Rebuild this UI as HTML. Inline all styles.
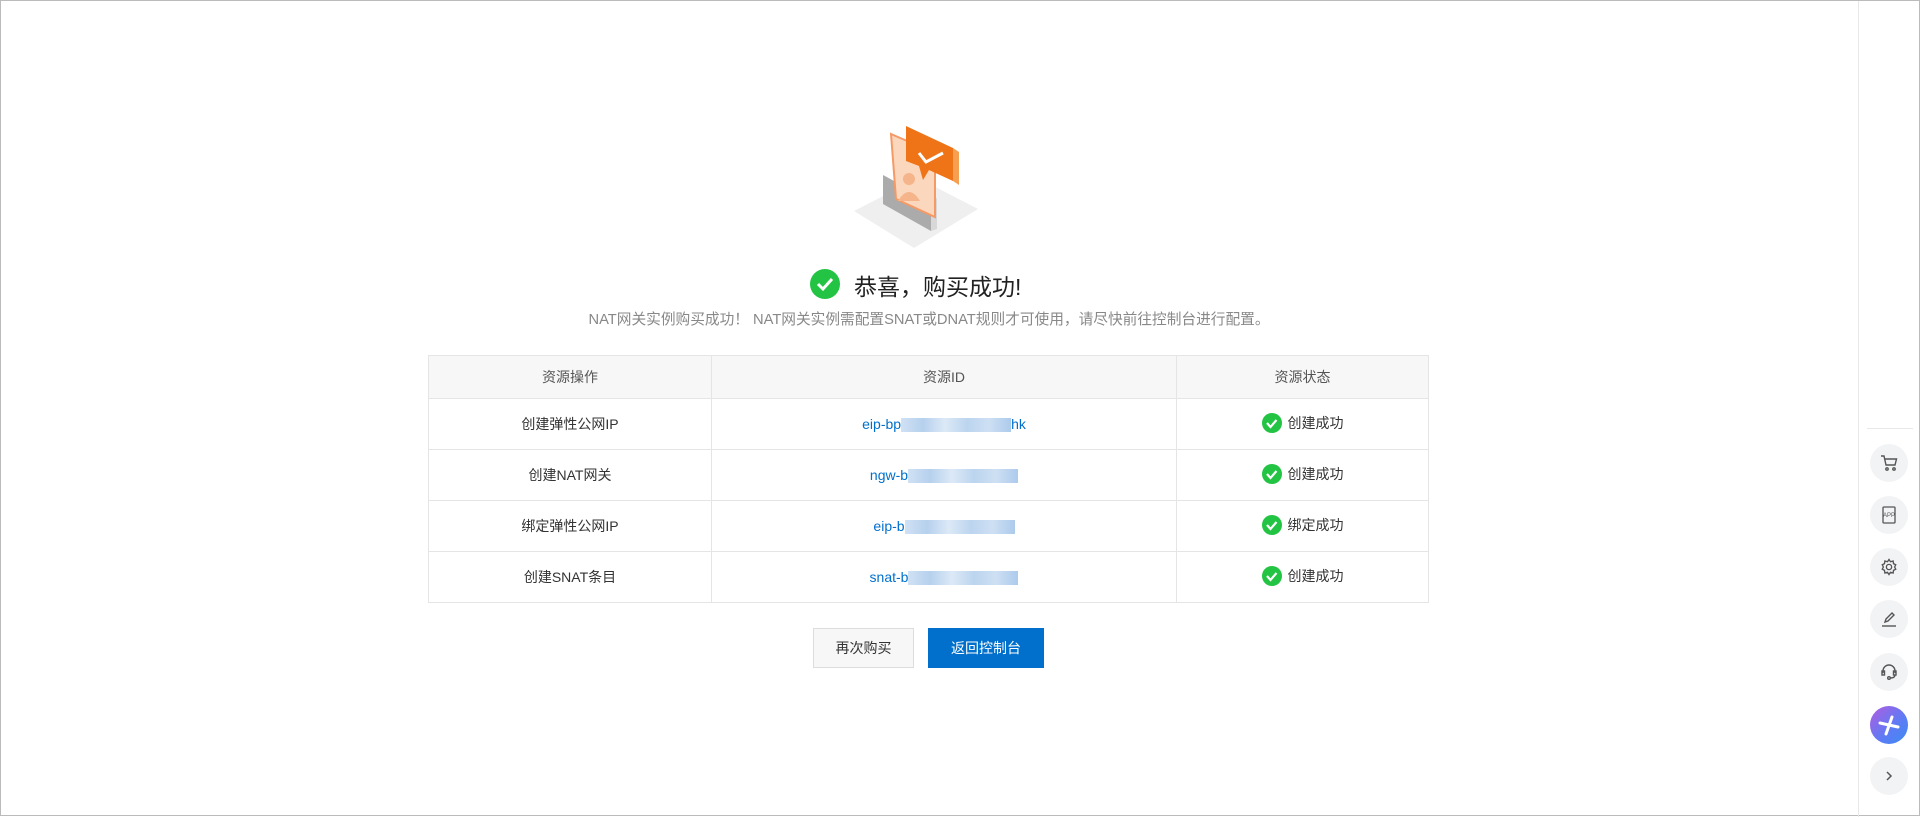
<!DOCTYPE html>
<html><head><meta charset="utf-8"><style>
*{margin:0;padding:0;box-sizing:border-box}
body{width:1920px;height:816px;background:#fff;font-family:"Liberation Sans","Noto Sans CJK SC",sans-serif;position:relative;overflow:hidden;border:1px solid #bbb}
.abs{position:absolute}
table{position:absolute;left:427px;top:354px;width:1001px;border-collapse:collapse;font-size:14px;color:#333}
td,th{border:1px solid #e5e5e5;text-align:center;font-weight:normal}
th{background:#f7f7f7;height:43px;color:#555}
td{height:51px}
a{color:#0070cc;text-decoration:none}
.blur{display:inline-block;width:110px;height:14px;vertical-align:middle;background:linear-gradient(90deg,#c8dcf2,#a9c8ea,#d6e5f5,#b0cdec,#c5daf1,#9ec1e8);opacity:.85}
.ok{display:inline-flex;align-items:center;gap:6px}
.sb{position:absolute;left:1857px;top:0;width:1px;height:816px;background:#e8e8e8}
.ic{position:absolute;left:1869px;width:38px;height:38px;border-radius:50%;background:#f2f3f5;display:flex;align-items:center;justify-content:center}
</style></head><body>
<svg class="abs" style="left:850px;top:120px" width="135" height="130" viewBox="0 0 135 130">
<polygon points="3,90 67,57 127,88 63,127" fill="#efefef"/>
<polygon points="32,54 80,80 80,110 32,83" fill="#ababab"/>
<polygon points="80,80 86,77 86,108 80,110" fill="#d8d8d8"/>
<polygon points="40,13 84,32 84,96 45,78" fill="#fbd7bd" stroke="#f59a66" stroke-width="2"/>
<circle cx="58" cy="58" r="6" fill="#f5b48a"/><path d="M47,80 q11,-18 22,0z" fill="#f5b48a"/>
<polygon points="55,5 102,27 102,60 78,49 72,59 68,45 55,40" fill="#ef7417"/>
<polygon points="102,27 108,31 108,64 102,60" fill="#f5a050"/>
<path d="M68,32 l7,9 l17,-9" stroke="#fff" stroke-width="3" fill="none"/>
</svg>
<svg class="abs" style="left:809px;top:268px" width="30" height="30" viewBox="0 0 30 30"><circle cx="15" cy="15" r="15" fill="#23c343"/><path d="M8,15 l5,5 l9,-10" stroke="#fff" stroke-width="3" fill="none"/></svg>
<div class="abs" style="left:853px;top:267px;font-size:23px;color:#222">恭喜，购买成功!</div>
<div class="abs" style="left:0;width:1856px;top:307px;text-align:center;font-size:14.7px;color:#888">NAT网关实例购买成功！ NAT网关实例需配置SNAT或DNAT规则才可使用，请尽快前往控制台进行配置。</div>
<table>
<tr><th style="width:283px">资源操作</th><th style="width:465px">资源ID</th><th>资源状态</th></tr>
<tr><td>创建弹性公网IP</td><td><a>eip-bp<span class="blur"></span>hk</a></td><td><span class="ok"><svg width="20" height="20"><circle cx="10" cy="10" r="10" fill="#23c343"/><path d="M5,10 l3.5,4 l6,-7" stroke="#fff" stroke-width="2.2" fill="none"/></svg>创建成功</span></td></tr>
<tr><td>创建NAT网关</td><td><a>ngw-b<span class="blur"></span></a></td><td><span class="ok"><svg width="20" height="20"><circle cx="10" cy="10" r="10" fill="#23c343"/><path d="M5,10 l3.5,4 l6,-7" stroke="#fff" stroke-width="2.2" fill="none"/></svg>创建成功</span></td></tr>
<tr><td>绑定弹性公网IP</td><td><a>eip-b<span class="blur"></span></a></td><td><span class="ok"><svg width="20" height="20"><circle cx="10" cy="10" r="10" fill="#23c343"/><path d="M5,10 l3.5,4 l6,-7" stroke="#fff" stroke-width="2.2" fill="none"/></svg>绑定成功</span></td></tr>
<tr><td>创建SNAT条目</td><td><a>snat-b<span class="blur"></span></a></td><td><span class="ok"><svg width="20" height="20"><circle cx="10" cy="10" r="10" fill="#23c343"/><path d="M5,10 l3.5,4 l6,-7" stroke="#fff" stroke-width="2.2" fill="none"/></svg>创建成功</span></td></tr>
</table>
<div class="abs" style="left:812px;top:627px;width:101px;height:40px;border:1px solid #ddd;background:#f7f7f7;font-size:14px;color:#333;display:flex;align-items:center;justify-content:center">再次购买</div>
<div class="abs" style="left:927px;top:627px;width:116px;height:40px;background:#0070cc;font-size:14px;color:#fff;display:flex;align-items:center;justify-content:center">返回控制台</div>
<div class="sb"></div>
<div class="abs" style="left:1866px;top:427px;width:46px;height:1px;background:#e8e8e8"></div>
<div class="ic" style="top:443px"><svg width="18" height="18" viewBox="0 0 18 18" fill="none" stroke="#555" stroke-width="1.4"><path d="M1,2h3l2,9h9l1.5-6H5"/><circle cx="7" cy="15" r="1.2"/><circle cx="14" cy="15" r="1.2"/></svg></div>
<div class="ic" style="top:495px"><svg width="18" height="18" viewBox="0 0 18 18" fill="none" stroke="#555" stroke-width="1.3"><rect x="3" y="1" width="12" height="16" rx="1"/><text x="9" y="11" font-size="6" text-anchor="middle" fill="#555" stroke="none" font-family="Liberation Sans">APP</text></svg></div>
<div class="ic" style="top:547px"><svg width="18" height="18" viewBox="0 0 24 24" fill="none" stroke="#555" stroke-width="1.8"><circle cx="12" cy="12" r="3.5"/><path d="M12,2 l2,3 3.5-1 .5,3.5 3,1.5-1.5,3 1.5,3-3,1.5-.5,3.5-3.5-1-2,3-2-3-3.5,1-.5-3.5-3-1.5 1.5-3-1.5-3 3-1.5.5-3.5 3.5,1z"/></svg></div>
<div class="ic" style="top:599px"><svg width="18" height="18" viewBox="0 0 18 18" fill="none" stroke="#555" stroke-width="1.4"><path d="M5,12 l1-3 6-6 2,2-6,6z"/><path d="M2,16h14"/></svg></div>
<div class="ic" style="top:652px"><svg width="18" height="18" viewBox="0 0 18 18" fill="none" stroke="#555" stroke-width="1.4"><path d="M3,10 v-2 a6,6 0 0 1 12,0 v2"/><rect x="2" y="8" width="2.5" height="4"/><rect x="13.5" y="8" width="2.5" height="4"/><path d="M15,12 q0,3-5,3"/><circle cx="9" cy="15" r="1.3"/></svg></div>
<div class="ic" style="top:705px;background:linear-gradient(135deg,#b25ce0,#5b7cf5 60%,#3c8cf0)"><svg width="22" height="22" viewBox="0 0 22 22"><path d="M2,9 L20,13 M14,3 L8,20" stroke="#fff" stroke-width="3" stroke-linecap="round"/></svg></div>
<div class="ic" style="top:756px"><svg width="14" height="14" viewBox="0 0 14 14" fill="none" stroke="#555" stroke-width="1.5"><path d="M5,3 l4,4 -4,4"/></svg></div>
</body></html>
